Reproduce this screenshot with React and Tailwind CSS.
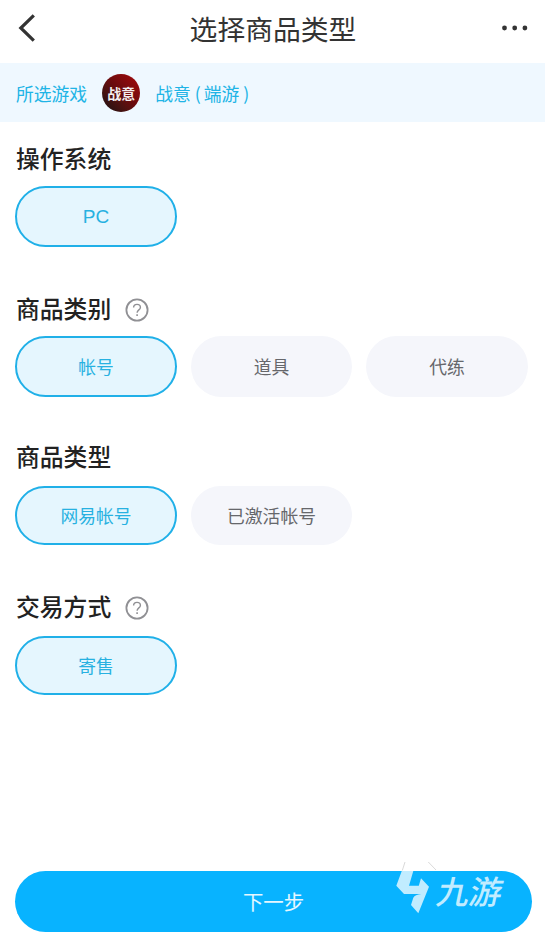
import { useState } from "react";

const sections = [
  { title: "操作系统", options: ["PC"], head: "h-[64px] pt-[19px]", pill: "h-[61px]" },
  { title: "商品类别", help: true, options: ["帐号", "道具", "代练"], head: "h-[89px] pt-[44px]", pill: "h-[61px]" },
  { title: "商品类型", options: ["网易帐号", "已激活帐号"], head: "h-[89px] pt-[42px]", pill: "h-[59px]" },
  { title: "交易方式", help: true, options: ["寄售"], head: "h-[91px] pt-[44px]", pill: "h-[59px]" },
];

function HelpIcon() {
  return (
    <svg viewBox="0 0 24 24" className="w-6 h-6 mt-[7px] ml-[14px]" fill="none" stroke="#909094">
      <circle cx="12" cy="12" r="10.6" strokeWidth="1.8" />
      <path d="M8.6 9.6c0-2 1.4-3.2 3.4-3.2s3.4 1.2 3.4 3c0 2.4-3.3 2.6-3.3 5.3" strokeWidth="1.4" />
      <path d="M12.1 16.3v1.8" strokeWidth="1.6" />
    </svg>
  );
}

function Section({ section }) {
  const [selected, setSelected] = useState(section.options[0]);

  return (
    <section>
      <div className={`flex items-start pl-px ${section.head}`}>
        <h2 className="text-[23.8px] leading-[33px] font-medium text-[#222]">{section.title}</h2>
        {section.help && <HelpIcon />}
      </div>
      <div className="grid grid-cols-[162px_161px_162px] gap-[14px]">
        {section.options.map((option) => (
          <button
            key={option}
            onClick={() => setSelected(option)}
            className={`rounded-full ${
              option === "PC" ? "pt-[2px] text-[19px] font-['Liberation_Sans',sans-serif]" : "text-[17.8px]"
            } ${section.pill} ${
              option === selected
                ? "bg-[#e5f6fe] border-2 border-[#20b0e8] text-[#27b1e1]"
                : "bg-[#f5f6fb] text-[#66676b]"
            }`}
          >
            {option}
          </button>
        ))}
      </div>
    </section>
  );
}

function Watermark() {
  return (
    <div className="absolute left-[395px] top-[860px] w-[115px] h-[56px] pointer-events-none">
      <svg viewBox="0 0 115 56" className="absolute inset-0 w-full h-full">
        <path
          d="M10 2.3 1.3 25.7 9 34H26.3Q20 34.5 18.3 37.8L16 45 23.3 53.3 34 26.7 26 18.3 23.8 25.7H14L18.3 11 22 2.3Z"
          fill="#fff"
          fillOpacity="0.75"
        />
        <path d="M10 2 7.3 10.5M33.3 2 41 10" stroke="#c9c9c9" strokeWidth="0.7" fill="none" />
      </svg>
      <span className="absolute left-[43px] top-[11px] text-[32.5px] leading-[38px] font-medium text-white/75 -skew-x-12 whitespace-nowrap">
        九游
      </span>
    </div>
  );
}

export default function App() {
  return (
    <div className="relative w-[545px] h-[944px] overflow-hidden bg-white flex flex-col font-['Noto_Sans_CJK_SC',sans-serif]">
      <header className="h-[63px] shrink-0 pl-[18px] pr-[17px] pb-[7px] flex items-center justify-between">
        <svg viewBox="0 0 28 28" className="w-7 h-7" fill="none" stroke="#333" strokeWidth="3.2">
          <path d="M15.8 1.3 2.8 14 15.8 26.7" />
        </svg>
        <h1 className="text-[27.8px] leading-10 text-[#333]">选择商品类型</h1>
        <svg viewBox="0 0 28 6" className="w-7 h-1.5" fill="#333">
          <circle cx="4.5" cy="3" r="2.4" />
          <circle cx="14.7" cy="3" r="2.4" />
          <circle cx="24.9" cy="3" r="2.4" />
        </svg>
      </header>

      <div className="h-[59px] shrink-0 px-4 pt-px flex items-center bg-[#eff8ff] text-[17.8px] text-[#20b4e6]">
        <span>所选游戏</span>
        <div className="w-[38px] h-[38px] mx-[15px] rounded-full bg-linear-to-bl from-[#a80609] via-[#680b0d] to-[#170e10] flex items-center justify-center text-[14px] font-bold text-[#f4eeee]">
          战意
        </div>
        <span>
          战意<span className="ml-[4px] mr-[3px]">(</span>端游<span className="mx-[4px]">)</span>
        </span>
      </div>

      <main className="flex-1 pl-[15px] pr-[17px]">
        {sections.map((section) => (
          <Section key={section.title} section={section} />
        ))}
      </main>

      <footer className="pl-[15px] pr-[13px] pb-3">
        <button className="w-full h-[61px] rounded-full bg-[#08b3ff] text-[20.4px] text-white/90">下一步</button>
      </footer>

      <Watermark />
    </div>
  );
}
